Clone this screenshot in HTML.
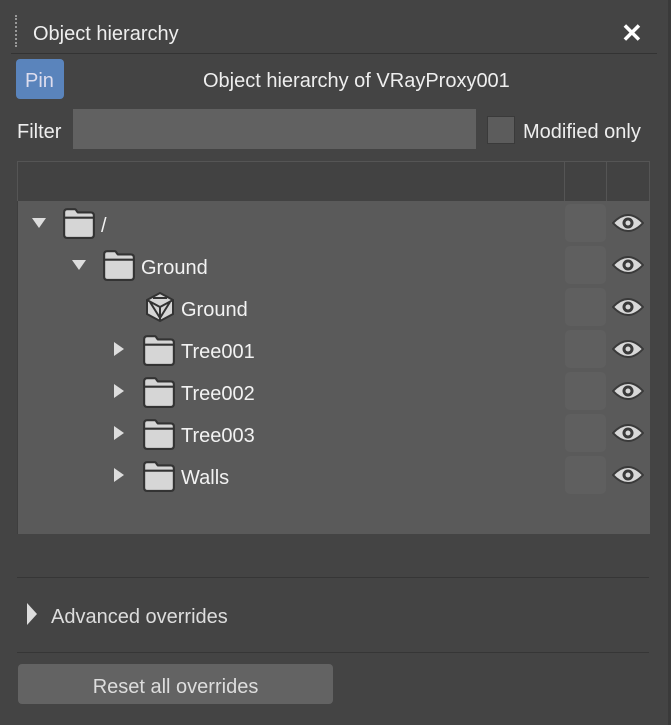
<!DOCTYPE html>
<html><head><style>
body{margin:0;width:671px;height:725px;background:#444;font-family:"Liberation Sans",sans-serif;color:#eee;position:relative;overflow:hidden}
.a{position:absolute}
.t{font-size:20px;white-space:nowrap}
.row{position:absolute;left:18px;width:631px;height:42px}
.row .lbl{position:absolute;top:11px;font-size:20px;color:#f2f2f2}
.cell{position:absolute;left:547px;top:2px;width:41px;height:38px;background:#5f5f5f;border-radius:5px}
.eye{position:absolute;left:594px;top:11px}
.tri{position:absolute}
</style></head><body>
<div class="a" style="left:668px;top:0;width:3px;height:725px;background:#3a3a3a"></div>
<div class="a" style="left:15px;top:15px;width:2px;height:32px;border-left:2px dotted #999"></div>
<div class="a t" style="left:33px;top:23px;font-size:20px">Object hierarchy</div>
<div class="a" style="left:621px;top:18px;font-size:26px;font-weight:bold;color:#fff">✕</div>
<div class="a" style="left:11px;top:53px;width:646px;height:1px;background:#333"></div>
<div class="a" style="left:16px;top:59px;width:48px;height:40px;background:#5a84bc;border-radius:4px"></div>
<div class="a t" style="left:25px;top:70px;color:#dde">Pin</div>
<div class="a t" style="left:203px;top:70px">Object hierarchy of VRayProxy001</div>
<div class="a t" style="left:17px;top:121px">Filter</div>
<div class="a" style="left:73px;top:109px;width:403px;height:40px;background:#616161"></div>
<div class="a" style="left:487px;top:116px;width:26px;height:26px;background:#5c5c5c;border:1px solid #3a3a3a"></div>
<div class="a t" style="left:523px;top:121px">Modified only</div>
<div class="a" style="left:17px;top:161px;width:631px;height:40px;background:#424242;border:1px solid #555;border-bottom:none"></div>
<div class="a" style="left:564px;top:161px;width:1px;height:40px;background:#555"></div>
<div class="a" style="left:606px;top:161px;width:1px;height:40px;background:#555"></div>
<div class="a" style="left:17px;top:201px;width:632px;height:333px;background:#5a5a5a;border-left:1px solid #3e3e3e"></div>
<svg width="0" height="0" style="position:absolute"><defs>
<symbol id="f" viewBox="0 0 32 32"><path d="M2 6 Q2 3 5 3 H12 Q13 3 14 5 L15 6 H27 Q30 6 30 9 V27 Q30 30 27 30 H5 Q2 30 2 27 Z" fill="#d6d6d6" stroke="#333" stroke-width="2"/><path d="M2 11 H30" stroke="#333" stroke-width="2"/></symbol>
<symbol id="e" viewBox="0 0 32 20"><path d="M1 10 Q16 -6 31 10 Q16 26 1 10 Z" fill="#d8d8d8" stroke="#3a3a3a" stroke-width="2"/><circle cx="16" cy="10" r="5.5" fill="#3a3a3a"/><circle cx="16" cy="10" r="2.5" fill="#d8d8d8"/></symbol>
</defs></svg>
<div class="a" style="left:18px;top:204px;width:631px;height:300px">
<div class="row" style="left:0;top:0"><svg class="tri" style="left:14px;top:14px" width="14" height="10"><path d="M0 0H14L7 10Z" fill="#ddd"/></svg><svg class="a" style="left:44px;top:2px" width="34" height="34"><use href="#f"/></svg><span class="lbl" style="left:83px">/</span><div class="cell" style="top:0"></div><svg class="eye" style="top:9px" width="32" height="20"><use href="#e"/></svg></div>
<div class="row" style="left:0;top:42px"><svg class="tri" style="left:54px;top:14px" width="14" height="10"><path d="M0 0H14L7 10Z" fill="#ddd"/></svg><svg class="a" style="left:84px;top:2px" width="34" height="34"><use href="#f"/></svg><span class="lbl" style="left:123px">Ground</span><div class="cell" style="top:0"></div><svg class="eye" style="top:9px" width="32" height="20"><use href="#e"/></svg></div>
<div class="row" style="left:0;top:84px"><svg class="a" style="left:126px;top:3px" width="32" height="32" viewBox="0 0 32 32"><path d="M16 2 L29 9 V23 L16 30 L3 23 V9 Z" fill="#d6d6d6" stroke="#333" stroke-width="2"/><path d="M3 9 L16 16 L29 9 M16 16 V30 M6 11 L16 27 M26 11 L16 27 M9 7 L23 7" stroke="#333" stroke-width="2" fill="none"/></svg><span class="lbl" style="left:163px">Ground</span><div class="cell" style="top:0"></div><svg class="eye" style="top:9px" width="32" height="20"><use href="#e"/></svg></div>
<div class="row" style="left:0;top:126px"><svg class="tri" style="left:96px;top:12px" width="10" height="14"><path d="M0 0V14L10 7Z" fill="#ddd"/></svg><svg class="a" style="left:124px;top:3px" width="34" height="34"><use href="#f"/></svg><span class="lbl" style="left:163px">Tree001</span><div class="cell" style="top:0"></div><svg class="eye" style="top:9px" width="32" height="20"><use href="#e"/></svg></div>
<div class="row" style="left:0;top:168px"><svg class="tri" style="left:96px;top:12px" width="10" height="14"><path d="M0 0V14L10 7Z" fill="#ddd"/></svg><svg class="a" style="left:124px;top:3px" width="34" height="34"><use href="#f"/></svg><span class="lbl" style="left:163px">Tree002</span><div class="cell" style="top:0"></div><svg class="eye" style="top:9px" width="32" height="20"><use href="#e"/></svg></div>
<div class="row" style="left:0;top:210px"><svg class="tri" style="left:96px;top:12px" width="10" height="14"><path d="M0 0V14L10 7Z" fill="#ddd"/></svg><svg class="a" style="left:124px;top:3px" width="34" height="34"><use href="#f"/></svg><span class="lbl" style="left:163px">Tree003</span><div class="cell" style="top:0"></div><svg class="eye" style="top:9px" width="32" height="20"><use href="#e"/></svg></div>
<div class="row" style="left:0;top:252px"><svg class="tri" style="left:96px;top:12px" width="10" height="14"><path d="M0 0V14L10 7Z" fill="#ddd"/></svg><svg class="a" style="left:124px;top:3px" width="34" height="34"><use href="#f"/></svg><span class="lbl" style="left:163px">Walls</span><div class="cell" style="top:0"></div><svg class="eye" style="top:9px" width="32" height="20"><use href="#e"/></svg></div>
</div>
<div class="a" style="left:17px;top:577px;width:632px;height:1px;background:#363636"></div>
<svg class="a" style="left:27px;top:603px" width="10" height="22"><path d="M0 0V22L10 11Z" fill="#ddd"/></svg>
<div class="a t" style="left:51px;top:606px;color:#ddd">Advanced overrides</div>
<div class="a" style="left:17px;top:652px;width:632px;height:1px;background:#363636"></div>
<div class="a" style="left:18px;top:664px;width:315px;height:40px;background:#636363;border-radius:4px"></div>
<div class="a t" style="left:18px;top:676px;width:315px;text-align:center;color:#ddd">Reset all overrides</div>
</body></html>
